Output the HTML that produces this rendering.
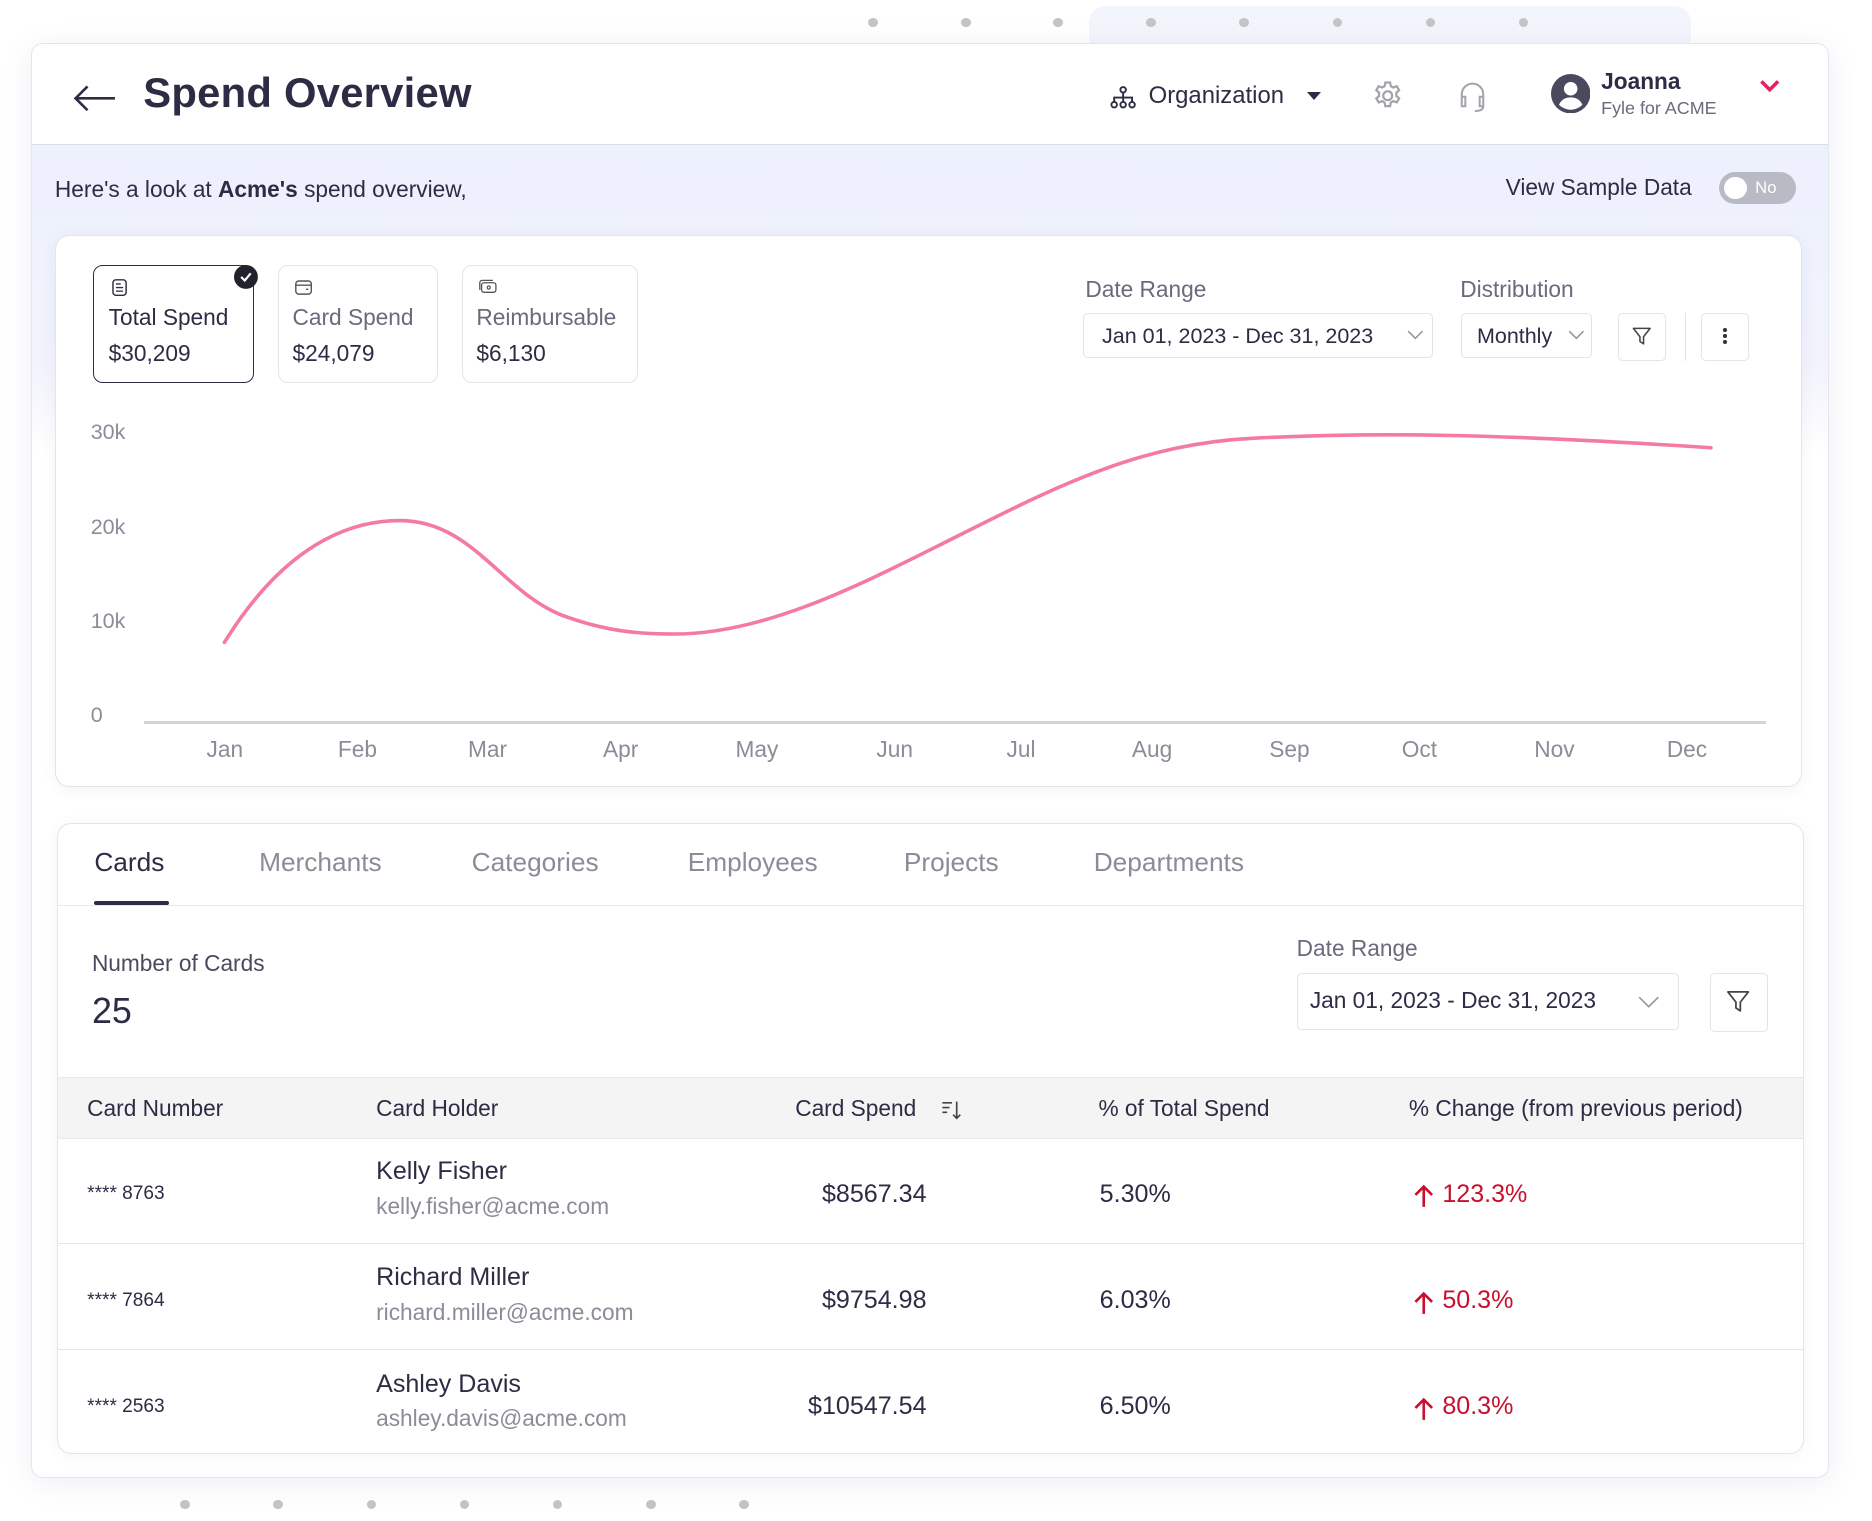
<!DOCTYPE html>
<html><head><meta charset="utf-8"><style>
*{box-sizing:border-box;margin:0;padding:0}
html,body{width:1872px;height:1521px;overflow:hidden;background:#fff}
#w{position:relative;width:1568px;height:1274px;zoom:1.194;font-family:"Liberation Sans",sans-serif;color:#2c2c45}
.a{position:absolute;white-space:nowrap}
.dot{position:absolute;width:8px;height:8px;border-radius:50%;background:#c4c4c8}
.box{position:absolute;background:#fff;border:1px solid #e4e4ea;border-radius:8px}
.g{color:#6a6a7c}
.m{color:#8c8c98}
</style></head><body><div id="w">
<div style="position:absolute;left:912px;top:5px;width:504px;height:40px;background:#f3f5fc;border-radius:14px"></div>
<div class="dot" style="left:727px;top:15px"></div><div class="dot" style="left:805px;top:15px"></div><div class="dot" style="left:882px;top:15px"></div><div class="dot" style="left:960px;top:15px"></div><div class="dot" style="left:1038px;top:15px"></div><div class="dot" style="left:1116px;top:15px"></div><div class="dot" style="left:1194px;top:15px"></div><div class="dot" style="left:1272px;top:15px"></div>
<div class="dot" style="left:151px;top:1256px"></div><div class="dot" style="left:229px;top:1256px"></div><div class="dot" style="left:307px;top:1256px"></div><div class="dot" style="left:385px;top:1256px"></div><div class="dot" style="left:463px;top:1256px"></div><div class="dot" style="left:541px;top:1256px"></div><div class="dot" style="left:619px;top:1256px"></div>
<div style="position:absolute;left:26px;top:36px;width:1506px;height:1202px;background:#fff;border:1px solid #e3e6f0;border-radius:10px;box-shadow:0 4px 24px rgba(90,100,160,.10);overflow:hidden">
 <div style="position:absolute;left:0;top:84px;width:100%;height:260px;background:linear-gradient(#edf1fd,#f1f2fc 70%,#fff)"></div>
 <div style="position:absolute;left:0;top:84px;width:100%;height:1px;background:#dcdde3"></div>
</div>
<svg class="a" style="left:60px;top:70px" width="38" height="24" viewBox="0 0 38 24"><path d="M36 12H3M13 2L3 12l10 10" stroke="#2c2c45" stroke-width="2.2" fill="none"/></svg>
<div class="a" style="left:120px;top:58px;font-size:35px;font-weight:600;letter-spacing:.2px">Spend Overview</div>
<svg class="a" style="left:930px;top:71px" width="22" height="20" viewBox="0 0 22 20"><g stroke="#2c2c45" stroke-width="1.6" fill="none"><circle cx="11" cy="4" r="2.3"/><path d="M11 6.5v4M3.5 14v-3.5h15V14M11 10.5V14"/><circle cx="3.5" cy="16.5" r="2.3"/><circle cx="11" cy="16.5" r="2.3"/><circle cx="18.5" cy="16.5" r="2.3"/></g></svg>
<div class="a" style="left:962px;top:69px;font-size:20px;font-weight:500">Organization</div>
<div class="a" style="left:1095px;top:77px;width:0;height:0;border-left:6px solid transparent;border-right:6px solid transparent;border-top:7px solid #2c2c45"></div>
<svg class="a" style="left:1148px;top:66px" width="28" height="28" viewBox="0 0 24 24"><g stroke="#a3a3ab" stroke-width="1.6" fill="none"><circle cx="12" cy="12" r="3.2"/><path d="M10.3 2.5h3.4l.5 2.6 1.8 1 2.5-.9 1.7 2.9-2 1.7v2.4l2 1.7-1.7 2.9-2.5-.9-1.8 1-.5 2.6h-3.4l-.5-2.6-1.8-1-2.5.9-1.7-2.9 2-1.7V9.8l-2-1.7 1.7-2.9 2.5.9 1.8-1z"/></g></svg>
<svg class="a" style="left:1220px;top:67px" width="26" height="28" viewBox="0 0 26 28"><path d="M4 17v-5a9 9 0 0118 0v5M4 14h3v8H4zM19 14h3v8h-3zM22 22c0 3-3 4-7 4" stroke="#a3a3ab" stroke-width="1.7" fill="none"/></svg>
<svg class="a" style="left:1299px;top:62px" width="33" height="33" viewBox="0 0 32 32"><circle cx="16" cy="16" r="16" fill="#4a4a5e"/><circle cx="16" cy="12" r="5.5" fill="#fff"/><path d="M6.5 25c2-4.5 5.5-6 9.5-6s7.5 1.5 9.5 6c-2.5 2.5-6 4-9.5 4s-7-1.5-9.5-4z" fill="#fff"/></svg>
<div class="a" style="left:1341px;top:57px;font-size:19px;font-weight:700">Joanna</div>
<div class="a g" style="left:1341px;top:82px;font-size:15px">Fyle for ACME</div>
<svg class="a" style="left:1473px;top:66px" width="18" height="12" viewBox="0 0 18 12"><path d="M2 2l7 7 7-7" stroke="#e0245e" stroke-width="3" fill="none"/></svg>
<div class="a" style="left:46px;top:147px;font-size:19px;font-weight:500">Here's a look at <b>Acme's</b> spend overview,</div>
<div class="a" style="left:1261px;top:146px;font-size:19px;font-weight:500">View Sample Data</div>
<div class="a" style="left:1440px;top:144px;width:64px;height:27px;border-radius:14px;background:#b8bac4"><div style="position:absolute;left:4px;top:4px;width:19px;height:19px;border-radius:50%;background:#fff"></div><span style="position:absolute;left:30px;top:5px;font-size:14px;color:#fff">No</span></div>

<div class="box" style="left:46px;top:197px;width:1463px;height:462px;border-radius:12px;box-shadow:0 2px 12px rgba(90,100,160,.07)"></div>
<div class="box" style="left:78px;top:222px;width:135px;height:99px;border:1.5px solid #2c2c45"></div>
<div class="box" style="left:233px;top:222px;width:134px;height:99px"></div>
<div class="box" style="left:387px;top:222px;width:147px;height:99px"></div>
<svg class="a" style="left:196px;top:222px" width="20" height="20" viewBox="0 0 20 20"><circle cx="10" cy="10" r="10" fill="#22222e"/><path d="M6 10l3 3 5-6" stroke="#fff" stroke-width="1.8" fill="none"/></svg>
<svg class="a" style="left:92px;top:233px" width="16" height="16" viewBox="0 0 16 16"><rect x="2.5" y="1.5" width="11" height="13" rx="2.5" stroke="#2c2c45" stroke-width="1.2" fill="none"/><path d="M5 5h4M5 8h6M5 11h6" stroke="#2c2c45" stroke-width="1.1"/></svg>
<svg class="a" style="left:246px;top:233px" width="16" height="16" viewBox="0 0 16 16"><rect x="1.5" y="2.5" width="13" height="11" rx="2.5" stroke="#555" stroke-width="1.2" fill="none"/><path d="M1.5 6h13M10 9.5h2" stroke="#555" stroke-width="1.1"/></svg>
<svg class="a" style="left:400px;top:233px" width="17" height="16" viewBox="0 0 17 16"><rect x="3" y="4" width="12" height="8" rx="2" stroke="#555" stroke-width="1.1" fill="none"/><path d="M1.5 10V4a2 2 0 012-2h9" stroke="#555" stroke-width="1.1" fill="none"/><circle cx="9" cy="8" r="1.3" stroke="#555" fill="none"/></svg>
<div class="a" style="left:91px;top:255px;font-size:19px">Total Spend</div>
<div class="a" style="left:91px;top:285px;font-size:19px;font-weight:500">$30,209</div>
<div class="a g" style="left:245px;top:255px;font-size:19px">Card Spend</div>
<div class="a" style="left:245px;top:285px;font-size:19px;font-weight:500">$24,079</div>
<div class="a g" style="left:399px;top:255px;font-size:19px">Reimbursable</div>
<div class="a" style="left:399px;top:285px;font-size:19px;font-weight:500">$6,130</div>

<div class="a g" style="left:909px;top:231px;font-size:19px">Date Range</div>
<div class="a g" style="left:1223px;top:231px;font-size:19px">Distribution</div>
<div class="box" style="left:907px;top:262px;width:293px;height:38px;border-radius:4px"></div>
<div class="a" style="left:923px;top:271px;font-size:18px">Jan 01, 2023 - Dec 31, 2023</div>
<svg class="a" style="left:1178px;top:276px" width="14" height="9" viewBox="0 0 14 9"><path d="M1 1l6 6 6-6" stroke="#999" stroke-width="1.3" fill="none"/></svg>
<div class="box" style="left:1224px;top:262px;width:109px;height:38px;border-radius:4px"></div>
<div class="a" style="left:1237px;top:271px;font-size:18px">Monthly</div>
<svg class="a" style="left:1313px;top:276px" width="14" height="9" viewBox="0 0 14 9"><path d="M1 1l6 6 6-6" stroke="#999" stroke-width="1.3" fill="none"/></svg>
<div class="box" style="left:1355px;top:262px;width:40px;height:40px;border-radius:4px"></div>
<svg class="a" style="left:1366px;top:273px" width="18" height="18" viewBox="0 0 18 18"><path d="M2 2h14l-5.5 7v6l-3-2V9z" stroke="#444" stroke-width="1.3" fill="none" stroke-linejoin="round"/></svg>
<div class="a" style="left:1411px;top:262px;width:1px;height:40px;background:#e4e4ea"></div>
<div class="box" style="left:1425px;top:262px;width:40px;height:40px;border-radius:4px"></div>
<div class="a" style="left:1443px;top:275px;width:3px;height:3px;border-radius:50%;background:#333;box-shadow:0 5px 0 #333,0 10px 0 #333"></div>

<div class="a m" style="left:76px;top:352px;font-size:18px">30k</div>
<div class="a m" style="left:76px;top:431px;font-size:18px">20k</div>
<div class="a m" style="left:76px;top:510px;font-size:18px">10k</div>
<div class="a m" style="left:76px;top:589px;font-size:18px">0</div>
<div class="a" style="left:121px;top:604px;width:1358px;height:2px;background:#d4d4d8"></div>
<svg class="a" style="left:0;top:0" width="1560" height="700" viewBox="0 0 1560 700"><path d="M188 538C230 470 280 436 335 436C395 436 420 495 470 515C510 530 540 531 565 531C640 531 720 490 790 455C880 410 950 372 1050 367C1150 362 1250 363 1433 375" stroke="#f47a9e" stroke-width="3" fill="none" stroke-linecap="round"/></svg>
<div class="a m" style="left:173px;top:616px;font-size:19px">Jan</div>
<div class="a m" style="left:283px;top:616px;font-size:19px">Feb</div>
<div class="a m" style="left:392px;top:616px;font-size:19px">Mar</div>
<div class="a m" style="left:505px;top:616px;font-size:19px">Apr</div>
<div class="a m" style="left:616px;top:616px;font-size:19px">May</div>
<div class="a m" style="left:734px;top:616px;font-size:19px">Jun</div>
<div class="a m" style="left:843px;top:616px;font-size:19px">Jul</div>
<div class="a m" style="left:948px;top:616px;font-size:19px">Aug</div>
<div class="a m" style="left:1063px;top:616px;font-size:19px">Sep</div>
<div class="a m" style="left:1174px;top:616px;font-size:19px">Oct</div>
<div class="a m" style="left:1285px;top:616px;font-size:19px">Nov</div>
<div class="a m" style="left:1396px;top:616px;font-size:19px">Dec</div>

<div class="box" style="left:48px;top:689px;width:1463px;height:529px;border-radius:12px;overflow:hidden;box-shadow:0 2px 12px rgba(90,100,160,.06)">
 <div style="position:absolute;left:0;top:68px;width:100%;height:1px;background:#e8e8ec"></div>
 <div style="position:absolute;left:30px;top:65px;width:63px;height:3px;background:#2c2c45;border-radius:2px"></div>
 <div style="position:absolute;left:0;top:212px;width:100%;height:52px;background:#f4f4f5;border-top:1px solid #eaeaee;border-bottom:1px solid #eaeaee"></div>
 <div style="position:absolute;left:0;top:351px;width:100%;height:1px;background:#e6e6ea"></div>
 <div style="position:absolute;left:0;top:440px;width:100%;height:1px;background:#e6e6ea"></div>
</div>
<div class="a" style="left:79px;top:709px;font-size:22px;font-weight:500">Cards</div>
<div class="a m" style="left:217px;top:709px;font-size:22px;font-weight:500">Merchants</div>
<div class="a m" style="left:395px;top:709px;font-size:22px;font-weight:500">Categories</div>
<div class="a m" style="left:576px;top:709px;font-size:22px;font-weight:500">Employees</div>
<div class="a m" style="left:757px;top:709px;font-size:22px;font-weight:500">Projects</div>
<div class="a m" style="left:916px;top:709px;font-size:22px;font-weight:500">Departments</div>
<div class="a" style="left:77px;top:796px;font-size:19px;color:#4a4a5e">Number of Cards</div>
<div class="a" style="left:77px;top:830px;font-size:30px;font-weight:500">25</div>
<div class="a g" style="left:1086px;top:783px;font-size:19px">Date Range</div>
<div class="box" style="left:1086px;top:815px;width:320px;height:48px;border-radius:4px"></div>
<div class="a" style="left:1097px;top:827px;font-size:19px">Jan 01, 2023 - Dec 31, 2023</div>
<svg class="a" style="left:1372px;top:834px" width="18" height="11" viewBox="0 0 18 11"><path d="M1 1l8 8 8-8" stroke="#999" stroke-width="1.4" fill="none"/></svg>
<div class="box" style="left:1432px;top:815px;width:49px;height:49px;border-radius:4px"></div>
<svg class="a" style="left:1445px;top:828px" width="22" height="22" viewBox="0 0 18 18"><path d="M2 2h14l-5.5 7v6l-3-2V9z" stroke="#444" stroke-width="1.2" fill="none" stroke-linejoin="round"/></svg>
<div class="a" style="left:73px;top:917px;font-size:19px;font-weight:500">Card Number</div>
<div class="a" style="left:315px;top:917px;font-size:19px;font-weight:500">Card Holder</div>
<div class="a" style="left:666px;top:917px;font-size:19px;font-weight:500">Card Spend</div>
<svg class="a" style="left:787px;top:920px" width="20" height="20" viewBox="0 0 20 20"><path d="M2 4h8M2 8h6M2 12h4M14 3v14M11 14l3 3 3-3" stroke="#444" stroke-width="1.4" fill="none"/></svg>
<div class="a" style="left:920px;top:917px;font-size:19px;font-weight:500">% of Total Spend</div>
<div class="a" style="left:1180px;top:917px;font-size:19px;font-weight:500">% Change <span style="font-weight:400">(from previous period)</span></div>

<div class="a" style="left:73px;top:991px;font-size:16px;font-weight:500">**** 8763</div>
<div class="a" style="left:315px;top:969px;font-size:21px">Kelly Fisher</div>
<div class="a m" style="left:315px;top:999px;font-size:19px">kelly.fisher@acme.com</div>
<div class="a" style="left:576px;top:988px;width:200px;text-align:right;font-size:21px;font-weight:500">$8567.34</div>
<div class="a" style="left:921px;top:988px;font-size:21px;font-weight:500">5.30%</div>
<div class="a" style="left:1208px;top:988px;font-size:21px;font-weight:500;color:#c8102e">123.3%</div>
<svg class="a" style="left:1183px;top:991px" width="18" height="21" viewBox="0 0 18 21"><path d="M9 20V3M2 10l7-7 7 7" stroke="#c8102e" stroke-width="2.2" fill="none"/></svg>

<div class="a" style="left:73px;top:1080px;font-size:16px;font-weight:500">**** 7864</div>
<div class="a" style="left:315px;top:1058px;font-size:21px">Richard Miller</div>
<div class="a m" style="left:315px;top:1088px;font-size:19px">richard.miller@acme.com</div>
<div class="a" style="left:576px;top:1077px;width:200px;text-align:right;font-size:21px;font-weight:500">$9754.98</div>
<div class="a" style="left:921px;top:1077px;font-size:21px;font-weight:500">6.03%</div>
<div class="a" style="left:1208px;top:1077px;font-size:21px;font-weight:500;color:#c8102e">50.3%</div>
<svg class="a" style="left:1183px;top:1080px" width="18" height="21" viewBox="0 0 18 21"><path d="M9 20V3M2 10l7-7 7 7" stroke="#c8102e" stroke-width="2.2" fill="none"/></svg>

<div class="a" style="left:73px;top:1169px;font-size:16px;font-weight:500">**** 2563</div>
<div class="a" style="left:315px;top:1147px;font-size:21px">Ashley Davis</div>
<div class="a m" style="left:315px;top:1177px;font-size:19px">ashley.davis@acme.com</div>
<div class="a" style="left:576px;top:1166px;width:200px;text-align:right;font-size:21px;font-weight:500">$10547.54</div>
<div class="a" style="left:921px;top:1166px;font-size:21px;font-weight:500">6.50%</div>
<div class="a" style="left:1208px;top:1166px;font-size:21px;font-weight:500;color:#c8102e">80.3%</div>
<svg class="a" style="left:1183px;top:1169px" width="18" height="21" viewBox="0 0 18 21"><path d="M9 20V3M2 10l7-7 7 7" stroke="#c8102e" stroke-width="2.2" fill="none"/></svg>
</div></body></html>
